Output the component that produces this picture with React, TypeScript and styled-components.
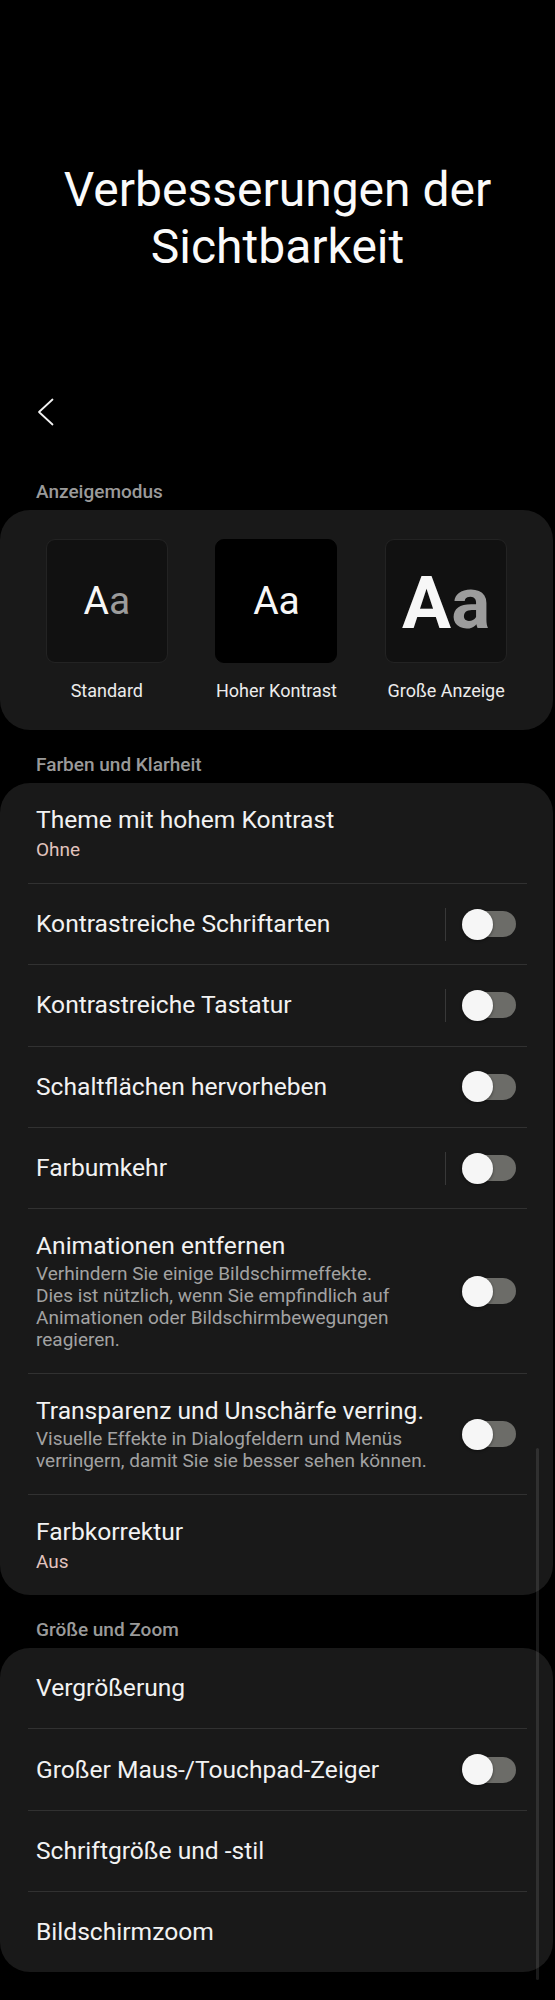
import styled, { createGlobalStyle } from "styled-components";

const GlobalStyle = createGlobalStyle`
  body {
    margin: 0;
    background: #000;
    font-family: Roboto, "Noto Sans", "Liberation Sans", sans-serif;
    -webkit-font-smoothing: antialiased;
  }
`;

type Item = {
  title: string;
  sub?: string;
  desc?: string[];
  toggle?: boolean;
  divider?: boolean;
};

const colorItems: Item[] = [
  { title: "Theme mit hohem Kontrast", sub: "Ohne" },
  { title: "Kontrastreiche Schriftarten", toggle: true, divider: true },
  { title: "Kontrastreiche Tastatur", toggle: true, divider: true },
  { title: "Schaltflächen hervorheben", toggle: true },
  { title: "Farbumkehr", toggle: true, divider: true },
  {
    title: "Animationen entfernen",
    desc: [
      "Verhindern Sie einige Bildschirmeffekte.",
      "Dies ist nützlich, wenn Sie empfindlich auf",
      "Animationen oder Bildschirmbewegungen",
      "reagieren.",
    ],
    toggle: true,
  },
  {
    title: "Transparenz und Unschärfe verring.",
    desc: [
      "Visuelle Effekte in Dialogfeldern und Menüs",
      "verringern, damit Sie sie besser sehen können.",
    ],
    toggle: true,
  },
  { title: "Farbkorrektur", sub: "Aus" },
];

const zoomItems: Item[] = [
  { title: "Vergrößerung" },
  { title: "Großer Maus-/Touchpad-Zeiger", toggle: true },
  { title: "Schriftgröße und -stil" },
  { title: "Bildschirmzoom" },
];

const modes = [
  { label: "Standard", variant: "standard" },
  { label: "Hoher Kontrast", variant: "contrast" },
  { label: "Große Anzeige", variant: "large" },
] as const;

type Variant = (typeof modes)[number]["variant"];

const App = () => {
  const renderItem = (item: Item) => (
    <Row key={item.title}>
      <TextCol>
        <RowTitle>{item.title}</RowTitle>
        {item.sub && <RowValue>{item.sub}</RowValue>}
        {item.desc && (
          <RowDesc>
            {item.desc.map((line, i) => (
              <span key={i}>
                {line}
                {i < item.desc!.length - 1 && <br />}
              </span>
            ))}
          </RowDesc>
        )}
      </TextCol>
      {item.divider && <VLine />}
      {item.toggle && <Switch />}
    </Row>
  );

  return (
    <Page>
      <GlobalStyle />
      <Title>
        Verbesserungen der
        <br />
        Sichtbarkeit
      </Title>
      <BackRow>
        <svg width="17" height="28" viewBox="0 0 17 28" fill="none">
          <path
            d="M15.5 1.5 L2 14 L15.5 26.5"
            stroke="#f2f2f2"
            strokeWidth="1.8"
            strokeLinecap="round"
            strokeLinejoin="round"
          />
        </svg>
      </BackRow>

      <SectionLabel>Anzeigemodus</SectionLabel>
      <ModeCard>
        {modes.map((m) => (
          <ModeItem key={m.label}>
            <Tile $variant={m.variant}>
              <Glyph $variant={m.variant}>
                A<GlyphSmall $variant={m.variant}>a</GlyphSmall>
              </Glyph>
            </Tile>
            <ModeLabel>{m.label}</ModeLabel>
          </ModeItem>
        ))}
      </ModeCard>

      <SectionLabel>Farben und Klarheit</SectionLabel>
      <Card>{colorItems.map(renderItem)}</Card>

      <SectionLabel>Größe und Zoom</SectionLabel>
      <Card>{zoomItems.map(renderItem)}</Card>

      <ScrollThumb />
    </Page>
  );
};

const Page = styled.div`
  position: relative;
  min-height: 2000px;
  padding-top: 161px;
  box-sizing: border-box;
  background: #000;
  overflow: hidden;
`;

const Title = styled.h1`
  margin: 0;
  font-size: 48px;
  font-weight: 400;
  line-height: 57px;
  text-align: center;
  color: #fafafa;
`;

const BackRow = styled.div`
  padding: 123px 0 31px 37px;

  svg {
    display: block;
  }
`;

const SectionLabel = styled.div`
  margin: 23px 0 6px;
  padding-left: 36px;
  font-size: 19px;
  font-weight: 500;
  line-height: 24px;
  color: #9a9a9a;
`;

const ModeCard = styled.div`
  display: grid;
  grid-template-columns: repeat(3, 1fr);
  margin-right: 2px;
  padding: 29px 22px 27px;
  border-radius: 30px;
  background: #191919;
`;

const ModeItem = styled.div`
  display: flex;
  flex-direction: column;
  align-items: center;
`;

const Tile = styled.div<{ $variant: Variant }>`
  display: flex;
  align-items: center;
  justify-content: center;
  width: 122px;
  height: 124px;
  box-sizing: border-box;
  border-radius: 9px;
  background: ${(p) => (p.$variant === "contrast" ? "#000" : "#111")};
  border: 1px solid ${(p) => (p.$variant === "contrast" ? "#000" : "#232323")};
`;

const Glyph = styled.span<{ $variant: Variant }>`
  font-size: ${(p) => (p.$variant === "large" ? "73px" : "39px")};
  font-weight: ${(p) => (p.$variant === "large" ? 700 : 400)};
  line-height: 1;
  color: #f7f7f7;
  margin-top: ${(p) => (p.$variant === "large" ? "4px" : "0")};
`;

const GlyphSmall = styled.span<{ $variant: Variant }>`
  color: ${(p) => (p.$variant === "contrast" ? "#f7f7f7" : "#9c9c9c")};
`;

const ModeLabel = styled.div`
  margin-top: 16px;
  font-size: 18px;
  line-height: 24px;
  color: #ececec;
`;

const Card = styled.div`
  margin-right: 2px;
  padding: 0 26px 0 28px;
  border-radius: 30px;
  background: #191919;
`;

const Row = styled.div`
  display: flex;
  align-items: center;
  min-height: 80.3px;
  padding: 22px 11px 22px 8px;
  box-sizing: border-box;

  & + & {
    min-height: 81.3px;
    border-top: 1px solid #313131;
  }
`;

const TextCol = styled.div`
  flex: 1;
  min-width: 0;
  display: flex;
  flex-direction: column;
  padding-right: 12px;
`;

const RowTitle = styled.div`
  font-size: 24.6px;
  line-height: 30px;
  color: #f2f2f2;
`;

const RowValue = styled.div`
  margin-top: 3px;
  font-size: 19px;
  line-height: 23px;
  color: #e2c3bd;
`;

const RowDesc = styled.div`
  margin-top: 2px;
  font-size: 19px;
  line-height: 22px;
  color: #a2a2a2;
  white-space: nowrap;
`;

const VLine = styled.span`
  width: 1px;
  height: 33px;
  margin-right: 16px;
  background: #383838;
  flex-shrink: 0;
`;

const Switch = styled.span`
  position: relative;
  display: block;
  flex-shrink: 0;
  width: 54px;
  height: 31px;

  &::before {
    content: "";
    position: absolute;
    left: 4px;
    right: 0;
    top: 2.5px;
    height: 26px;
    border-radius: 13px;
    background: #6c6c68;
  }

  &::after {
    content: "";
    position: absolute;
    left: 0;
    top: 0;
    width: 31px;
    height: 31px;
    border-radius: 50%;
    background: #f6f6f6;
    box-shadow: 0 1px 3px rgba(0, 0, 0, 0.45);
  }
`;

const ScrollThumb = styled.div`
  position: absolute;
  left: 536px;
  top: 1448px;
  width: 3px;
  height: 532px;
  border-radius: 2px;
  background: rgba(255, 255, 255, 0.1);
`;

export default App;
